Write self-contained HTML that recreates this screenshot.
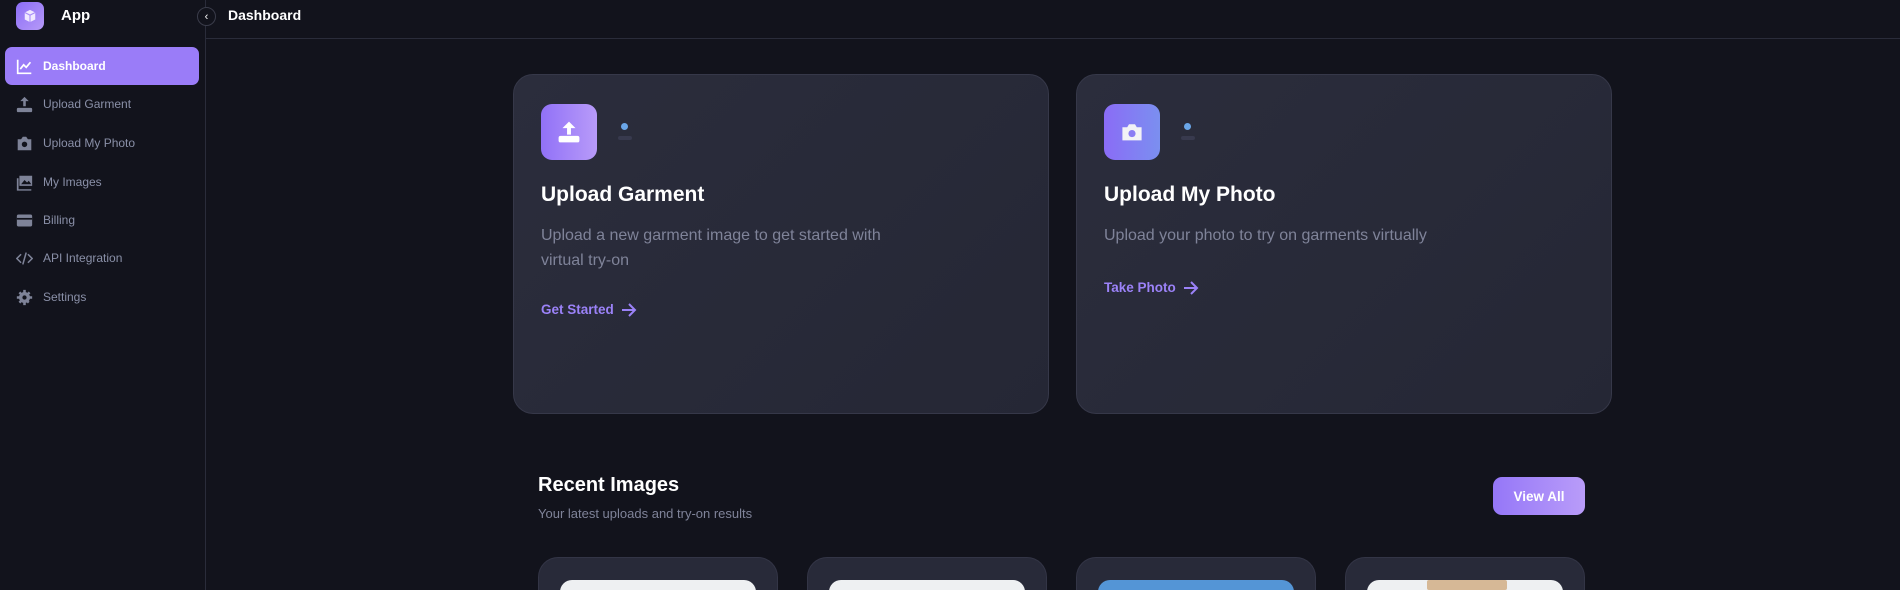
<!DOCTYPE html>
<html><head><meta charset="utf-8"><style>
*{box-sizing:border-box;margin:0;padding:0}
html{width:1900px;height:590px;overflow:hidden;background:#12131c}
body{width:1900px;height:590px;overflow:hidden;background:#12131c;font-family:"Liberation Sans",sans-serif;position:relative}
.sb{position:absolute;left:0;top:0;width:206px;height:590px;background:#12131c;border-right:1px solid #2a2c3a}
.logo{position:absolute;left:16px;top:2px;width:28px;height:28px;border-radius:7px;background:linear-gradient(135deg,#8b6cf6,#b69af8);display:flex;align-items:center;justify-content:center}
.app{position:absolute;left:61px;top:7px;color:#fff;font-weight:bold;font-size:15px}
.nav{position:absolute;left:5px;width:194px;height:38px;border-radius:7px;display:flex;align-items:center;padding-left:11px;color:#8a90a8;font-size:12px}
.nav svg{width:17px;height:17px;margin-right:10px;fill:#7e8398}
.nav.act{background:#9a7cf8;color:#fff;font-weight:bold}
.nav.act svg{fill:none;stroke:#fff}
.hdr{position:absolute;left:206px;top:0;width:1694px;height:39px;border-bottom:1px solid #2a2c3a}
.col{position:absolute;left:197px;top:7px;width:19px;height:19px;border-radius:50%;border:1px solid #3a3c4a;background:#12131c;color:#fff;font-size:11px;display:flex;align-items:center;justify-content:center}
.ht{position:absolute;left:228px;top:7px;color:#fff;font-weight:bold;font-size:14px}
.card{position:absolute;top:74px;width:536px;height:340px;border-radius:20px;background:linear-gradient(135deg,#2b2d3c,#252735);border:1px solid #363849}
.ib{position:absolute;left:27px;top:29px;width:56px;height:56px;border-radius:11px;display:flex;align-items:center;justify-content:center}
.dot{position:absolute;left:107px;top:48px;width:7px;height:7px;border-radius:50%;background:#6aa6e8}
.bar{position:absolute;left:104px;top:61px;width:14px;height:4px;border-radius:2px;background:#383a4e}
.ct{position:absolute;left:27px;top:108px;color:#fff;font-weight:bold;font-size:21px}
.cd{position:absolute;left:27px;top:148px;width:380px;color:#7f8399;font-size:16px;line-height:25px}
.cl{position:absolute;left:27px;color:#9b82f8;font-weight:bold;font-size:13.5px;display:flex;align-items:center}
.cl svg{margin-left:7px}
.rt{position:absolute;left:538px;top:474px;color:#fff;font-weight:bold;font-size:20px}
.rs{position:absolute;left:538px;top:506px;color:#7f8399;font-size:13px}
.va{position:absolute;left:1493px;top:477px;width:92px;height:38px;border-radius:9px;background:linear-gradient(90deg,#9577f8,#b99cf9);color:#fff;font-weight:bold;font-size:13.5px;display:flex;align-items:center;justify-content:center}
.ic{position:absolute;top:557px;width:240px;height:33px;border-radius:20px 20px 0 0;background:#282a39;border:1px solid #333546;border-bottom:none;overflow:hidden}
.im{position:absolute;left:21px;top:22px;width:196px;height:20px;border-radius:12px 12px 0 0;background:#eef0f2}
</style></head><body>
<div class="sb">
<div class="logo"><svg width="14" height="14" viewBox="0 0 16 16"><path d="M8 1l6 3v8l-6 3-6-3V4z" fill="#f0e8ff"/><path d="M2 4l6 3 6-3M8 7v8" stroke="#a68af8" stroke-width="1.2" fill="none"/></svg></div>
<div class="app">App</div>
<div class="nav act" style="top:47px"><svg viewBox="0 0 20 20" stroke-width="2"><path d="M2 2v16h16M5 13l4-5 3 3 5-6"/></svg>Dashboard</div>
<div class="nav" style="top:85px"><svg viewBox="0 0 20 20"><path d="M10 1l5 5h-3.5v6h-3V6H5z"/><rect x="1" y="14" width="18" height="5" rx="1.5"/></svg>Upload Garment</div>
<div class="nav" style="top:124px"><svg viewBox="0 0 20 20"><path d="M2 5h4l2-3h4l2 3h4v13H2z"/><circle cx="10" cy="11" r="3.2" fill="#12131c"/></svg>Upload My Photo</div>
<div class="nav" style="top:163px"><svg viewBox="0 0 20 20"><path d="M4 2h15v12H4z M1 5h2v13h15v1.5H1z"/><path d="M6 12l4-5 3 3 2-2 3 4z" fill="#12131c"/></svg>My Images</div>
<div class="nav" style="top:201px"><svg viewBox="0 0 20 20"><rect x="1" y="3" width="18" height="14" rx="2"/><rect x="1" y="7" width="18" height="2" fill="#12131c"/></svg>Billing</div>
<div class="nav" style="top:239px"><svg viewBox="0 0 20 20" style="fill:none;stroke:#7e8398;stroke-width:1.8"><path d="M6 5L1 10l5 5M14 5l5 5-5 5M12 3l-4 14"/></svg>API Integration</div>
<div class="nav" style="top:278px"><svg viewBox="0 0 20 20"><circle cx="10" cy="10" r="6.5"/><path d="M8.5 1h3v4h-3zM8.5 15h3v4h-3zM1 8.5h4v3H1zM15 8.5h4v3h-4zM3 5l2-2 3 3-2 2zM14 17l2-2-3-3-2 2zM3 15l2 2 3-3-2-2zM17 5l-2-2-3 3 2 2z"/><circle cx="10" cy="10" r="2.5" fill="#12131c"/></svg>Settings</div>
</div>
<div class="hdr"></div>
<div class="col">‹</div>
<div class="ht">Dashboard</div>

<div class="card" style="left:513px">
<div class="ib" style="background:linear-gradient(90deg,#9171f7,#b89bf9)"><svg width="26" height="26" viewBox="0 0 20 20" fill="#fff"><path d="M10 2l5 5h-3.5v5h-3V7H5z"/><rect x="2" y="13" width="16" height="5" rx="1.5"/></svg></div>
<div class="dot"></div><div class="bar"></div>
<div class="ct">Upload Garment</div>
<div class="cd">Upload a new garment image to get started with virtual try-on</div>
<div class="cl" style="top:300px;top:227px">Get Started<svg width="16" height="14" viewBox="0 0 16 14" fill="none" stroke="#9b82f8" stroke-width="2"><path d="M1 7h13M8 1l6 6-6 6"/></svg></div>
</div>
<div class="card" style="left:1076px">
<div class="ib" style="background:linear-gradient(90deg,#8a6cf6,#7b8ff0)"><svg width="24" height="24" viewBox="0 0 20 20" fill="#f2f2f6"><path d="M2 6h4l1.5-2.5h5L14 6h4v11H2z"/><circle cx="10" cy="11.3" r="3" fill="#8a7cf4"/></svg></div>
<div class="dot"></div><div class="bar"></div>
<div class="ct">Upload My Photo</div>
<div class="cd">Upload your photo to try on garments virtually</div>
<div class="cl" style="top:205px">Take Photo<svg width="16" height="14" viewBox="0 0 16 14" fill="none" stroke="#9b82f8" stroke-width="2"><path d="M1 7h13M8 1l6 6-6 6"/></svg></div>
</div>

<div class="rt">Recent Images</div>
<div class="rs">Your latest uploads and try-on results</div>
<div class="va">View All</div>
<div class="ic" style="left:538px"><div class="im"></div></div>
<div class="ic" style="left:807px"><div class="im"></div></div>
<div class="ic" style="left:1076px"><div class="im" style="background:#5495d6"></div></div>
<div class="ic" style="left:1345px"><div class="im"><div style="position:absolute;left:60px;top:0;width:80px;height:10px;background:#d6b896;border-radius:2px"></div></div></div>
</body></html>
